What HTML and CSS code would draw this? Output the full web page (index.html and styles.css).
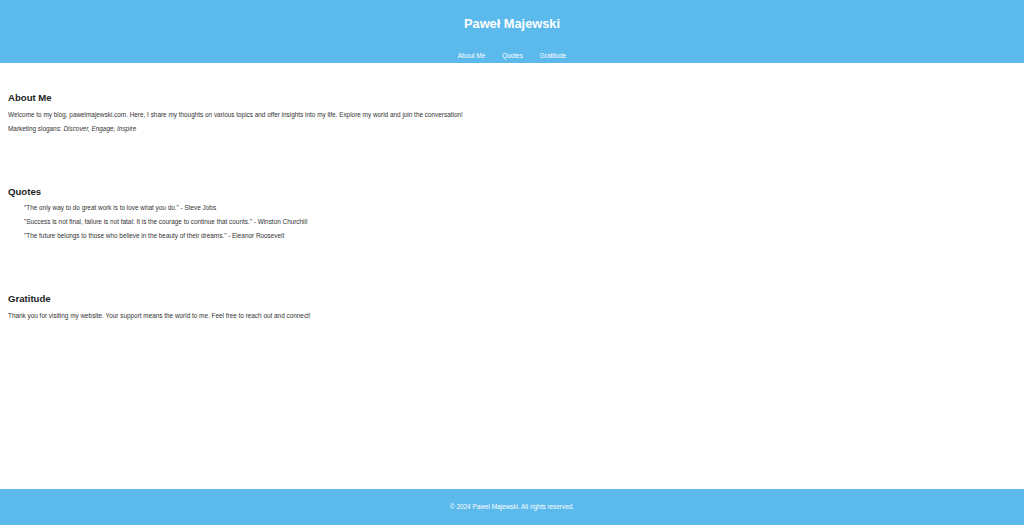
FILE: index.html
```html
<!DOCTYPE html>
<html lang="en">
<head>
<meta charset="utf-8">
<title>Paweł Majewski</title>
<link rel="stylesheet" href="styles.css">
</head>
<body>
<header class="site-header">
  <h1 class="site-title">Paweł Majewski</h1>
  <nav class="site-nav">
    <a href="#about">About Me</a>
    <a href="#quotes">Quotes</a>
    <a href="#gratitude">Gratitude</a>
  </nav>
</header>
<main class="content">
  <section class="section" id="about">
    <h2 class="section-title">About Me</h2>
    <p class="text">Welcome to my blog, pawelmajewski.com. Here, I share my thoughts on various topics and offer insights into my life. Explore my world and join the conversation!</p>
    <p class="text">Marketing slogans: <em>Discover, Engage, Inspire</em></p>
  </section>
  <section class="section" id="quotes">
    <h2 class="section-title">Quotes</h2>
    <ul class="quotes">
      <li class="text">"The only way to do great work is to love what you do." - Steve Jobs</li>
      <li class="text">"Success is not final, failure is not fatal: It is the courage to continue that counts." - Winston Churchill</li>
      <li class="text">"The future belongs to those who believe in the beauty of their dreams." - Eleanor Roosevelt</li>
    </ul>
  </section>
  <section class="section" id="gratitude">
    <h2 class="section-title">Gratitude</h2>
    <p class="text">Thank you for visiting my website. Your support means the world to me. Feel free to reach out and connect!</p>
  </section>
</main>
<footer class="site-footer">
  <p class="footer-text">© 2024 Pawel Majewski. All rights reserved.</p>
</footer>
</body>
</html>
```
FILE: styles.css
```css
html, body {
  margin: 0;
  padding: 0;
  height: 100%;
}
body {
  display: flex;
  flex-direction: column;
  min-height: 100vh;
  font-family: "Liberation Sans", Arial, sans-serif;
  font-size: 6.4px;
  color: #333;
  background: #fff;
}
.site-header {
  background: #5bb9ec;
  color: #fff;
  text-align: center;
  height: 63px;
  box-sizing: border-box;
  padding-top: 17px;
}
.site-title {
  margin: 0;
  font-size: 12.8px;
  line-height: 14px;
  font-weight: bold;
}
.site-nav {
  margin-top: 21px;
  display: flex;
  justify-content: center;
  gap: 17px;
  line-height: 8px;
}
.site-nav a {
  color: #fff;
  text-decoration: none;
}
.content {
  flex: 1;
  padding: 28px 8px 0;
  display: flex;
  flex-direction: column;
  gap: 52px;
}
.section-title {
  margin: 0 0 6.6px;
  font-size: 9.6px;
  line-height: 13px;
  font-weight: bold;
  color: #222;
}
.text {
  margin: 0 0 6px;
  line-height: 8px;
}
.text:last-child {
  margin-bottom: 0;
}
.quotes {
  list-style: none;
  margin: 0;
  padding: 0 0 0 16px;
}
.site-footer {
  background: #5bb9ec;
  color: #fff;
  text-align: center;
  height: 36px;
  display: flex;
  align-items: center;
  justify-content: center;
}
.footer-text {
  margin: 0;
  line-height: 8px;
}
```
